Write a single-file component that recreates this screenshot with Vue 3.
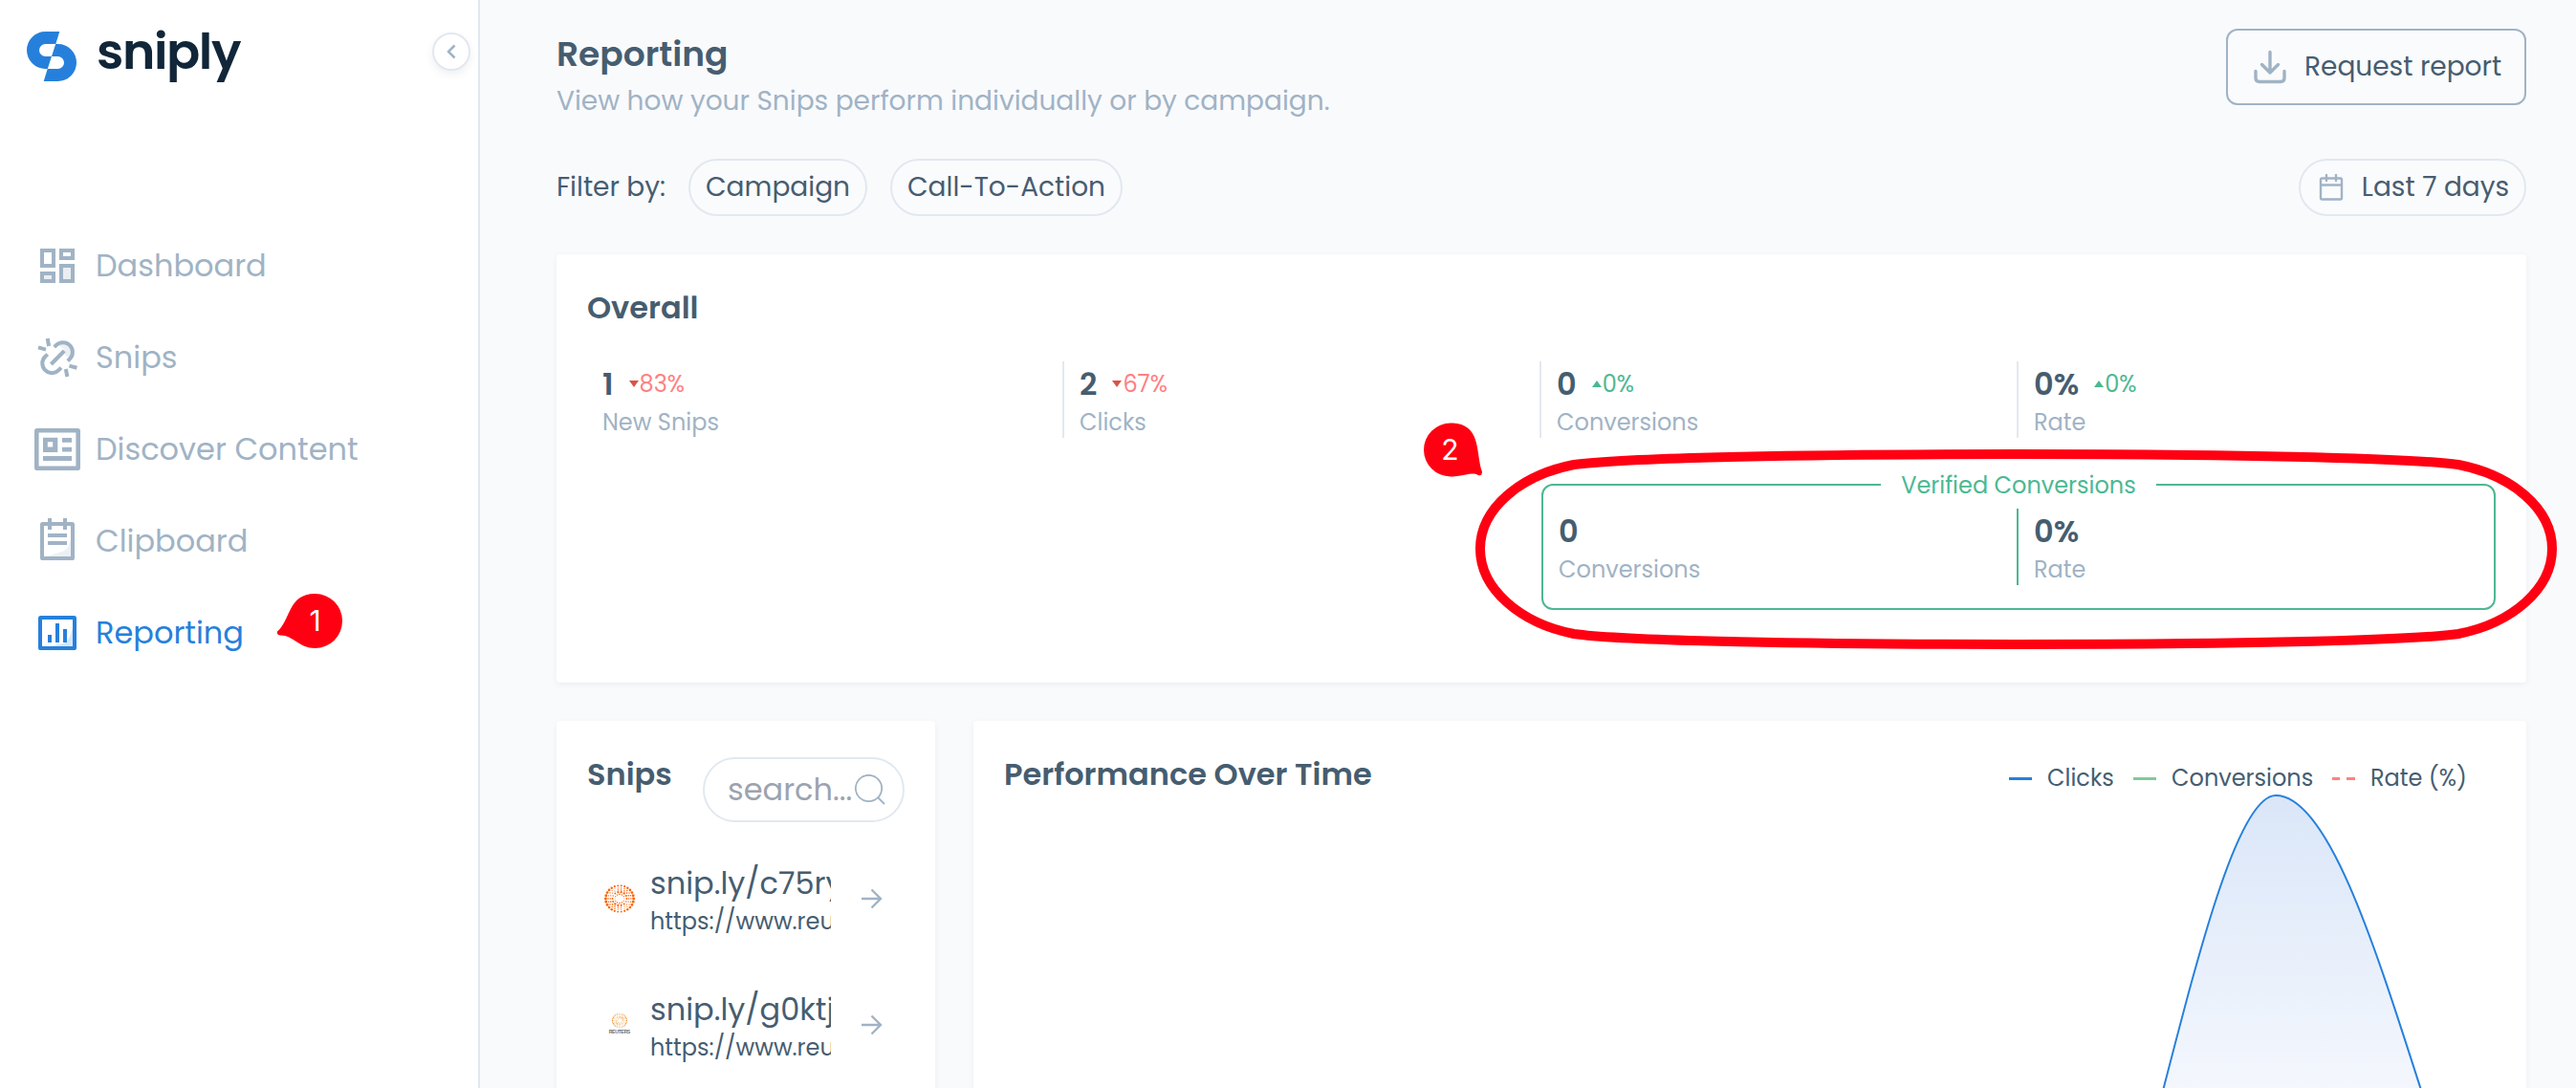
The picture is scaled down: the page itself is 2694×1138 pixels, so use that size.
<script setup>
import { ref } from 'vue'

const search = ref('')

const navItems = [
  { id: 'dashboard', label: 'Dashboard' },
  { id: 'snips', label: 'Snips' },
  { id: 'discover', label: 'Discover Content' },
  { id: 'clipboard', label: 'Clipboard' },
  { id: 'reporting', label: 'Reporting', active: true }
]

const stats = [
  { id: 'snips', value: '1', delta: '83%', trend: 'down', label: 'New Snips' },
  { id: 'clicks', value: '2', delta: '67%', trend: 'down', label: 'Clicks' },
  { id: 'conversions', value: '0', delta: '0%', trend: 'up', label: 'Conversions' },
  { id: 'rate', value: '0%', delta: '0%', trend: 'up', label: 'Rate' }
]

const verified = [
  { id: 'conversions', value: '0', label: 'Conversions' },
  { id: 'rate', value: '0%', label: 'Rate' }
]

const snips = [
  { id: 'c75ry', short: 'snip.ly/c75ry', url: 'https://www.reu', icon: 'globe' },
  { id: 'g0ktj', short: 'snip.ly/g0ktj', url: 'https://www.reu', icon: 'reuters' }
]

const legend = [
  { id: 'clicks', label: 'Clicks' },
  { id: 'conversions', label: 'Conversions' },
  { id: 'rate', label: 'Rate (%)' }
]

// rings of dots for the favicon
const rings = [
  { r: 4.9, n: 12, size: 0.7 },
  { r: 7.5, n: 14, size: 1.05 },
  { r: 9.8, n: 18, size: 0.75 },
  { r: 11.9, n: 22, size: 0.7 },
  { r: 14.6, n: 26, size: 1.3 }
]

const dots = rings.flatMap(({ r, n, size }) =>
  Array.from({ length: n }, (_, i) => {
    const a = (i / n) * Math.PI * 2
    return {
      x: 16 + Math.cos(a) * r,
      y: 16 + Math.sin(a) * r * 0.94,
      size: size * (0.7 + 0.4 * Math.abs(Math.cos(a + (14.6 - r) * 0.16)))
    }
  })
)
</script>

<template>
  <div class="page">
    <aside class="sidebar">
      <div class="brand">
        <svg class="brand-mark" viewBox="0 0 52 52">
          <path d="M34.3 0H19.5a19.5 19.5 0 0 0 0 39h2.3L26 26h-6.500a6.500 6.500 0 0 1 0-13h10.800z" />
          <path d="M34.3 0H19.5a19.5 19.5 0 0 0 0 39h2.3L26 26h-6.500a6.500 6.500 0 0 1 0-13h10.800z" transform="rotate(180 26 26)" />
        </svg>
        <span class="brand-name">sniply</span>
        <button class="collapse">
          <svg viewBox="0 0 36 36"><path d="M21.500 11.500L15 18l6.500 6.500" /></svg>
        </button>
      </div>

      <nav class="nav">
        <a v-for="item in navItems" :key="item.id" class="nav-item" :class="{ active: item.active }">
          <svg v-if="item.id === 'dashboard'" class="nav-icon" viewBox="0 0 24 24">
            <path class="line" d="M4 4h6v8H4zM14 4h6v4h-6z" />
            <path class="line tint" d="M4 16h6v4H4zM14 12h6v8h-6z" />
          </svg>
          <svg v-else-if="item.id === 'snips'" class="nav-icon" viewBox="0 0 24 24">
            <path class="shade" d="M12 5.500A5 5 0 0 1 18.600 12.600L16 10.500l-.5-3z" />
            <path class="line" d="M10.400 6.600L11.300 5.600A5 5 0 0 1 18.500 12.700L17.400 13.700M6.900 10.300L5.600 11.500A5 5 0 0 0 12.700 18.600L14 17.300M8.700 15.500l6.900-7" />
            <path class="line" d="M6.800 2l.8 4M2 6.700l4 1.100M18.200 16.300l4 1.100M16.400 18l.8 4" />
          </svg>
          <svg v-else-if="item.id === 'discover'" class="nav-icon" viewBox="0 0 48 48">
            <rect class="line thick" x="2.300" y="4.300" width="43.400" height="39.400" rx="0.500" />
            <path class="solid" fill-rule="evenodd" d="M9 11.700h15.300V27H9zM13.800 16.300v5.200h5.400v-5.200z" />
            <path class="solid" d="M29 12h10v4.700H29zM29 21.700h10v4.700H29zM9 31h30v5H9z" />
          </svg>
          <svg v-else-if="item.id === 'clipboard'" class="nav-icon" viewBox="0 0 24 24">
            <path class="shade" d="M5 20.600l10-3.400q2.500-.8 3.200-3.700L20 9v12H5z" />
            <rect class="line" x="4" y="3" width="16" height="18" rx="0.300" />
            <path class="line" d="M8 0v6M16 0v6M7 9h10M7 13h10" />
          </svg>
          <svg v-else class="nav-icon" viewBox="0 0 24 24">
            <path class="shade" d="M6 19.500l9-2q3-1 4-5L21 6v14H6z" />
            <rect class="line" x="3" y="4" width="18" height="16" rx="0.300" />
            <path class="line" d="M8 13v4M12 7v10M16 10v7" />
          </svg>
          <span>{{ item.label }}</span>
        </a>
      </nav>
    </aside>

    <main class="main">
      <header class="page-header">
        <div>
          <h1 class="page-title">Reporting</h1>
          <p class="page-subtitle">View how your Snips perform individually or by campaign.</p>
        </div>
        <button class="request">
          <svg class="request-icon" viewBox="0 0 36 36">
            <path d="M18 2.500V24M9.500 15.500L18 24l8.500-8.500M3 22.500v7q0 4 4 4h22q4 0 4-4v-7" />
          </svg>
          <span>Request report</span>
        </button>
      </header>

      <div class="filters">
        <span class="filter-label">Filter by:</span>
        <button class="pill campaign">Campaign</button>
        <button class="pill cta">Call-To-Action</button>
        <button class="pill range">
          <svg class="range-icon" viewBox="0 0 28 28">
            <path d="M4.500 4.500h19q1.500 0 1.500 1.500v19q0 1.500-1.500 1.500h-19Q3 26.500 3 25V6q0-1.500 1.500-1.500zM3 11.500h22M9 1v6M19 1v6" />
          </svg>
          <span>Last 7 days</span>
        </button>
      </div>

      <section class="card overall">
        <h2 class="card-title">Overall</h2>
        <div class="stats">
          <div v-for="stat in stats" :key="stat.id" class="stat">
            <div class="stat-top">
              <span class="stat-value">{{ stat.value }}</span>
              <span class="delta" :class="stat.trend">
                <i class="triangle"></i>
                <span>{{ stat.delta }}</span>
              </span>
            </div>
            <span class="stat-label">{{ stat.label }}</span>
          </div>
        </div>
        <div class="verified">
          <span class="verified-title">Verified Conversions</span>
          <div v-for="stat in verified" :key="stat.id" class="stat">
            <div class="stat-top">
              <span class="stat-value">{{ stat.value }}</span>
            </div>
            <span class="stat-label">{{ stat.label }}</span>
          </div>
        </div>
      </section>

      <div class="columns">
        <section class="card snips">
          <div class="snips-header">
            <h2 class="card-title">Snips</h2>
            <label class="search">
              <input v-model="search" class="search-input" type="text" placeholder="search..." />
              <svg class="search-icon" viewBox="0 0 32 32">
                <circle cx="14.500" cy="14.500" r="13.700" />
                <path d="M24 24l7 7" />
              </svg>
            </label>
          </div>
          <ul class="snip-list">
            <li v-for="snip in snips" :key="snip.id" class="snip">
              <svg v-if="snip.icon === 'globe'" class="favicon globe" viewBox="0 0 32 32">
                <circle v-for="(dot, i) in dots" :key="i" :cx="dot.x" :cy="dot.y" :r="dot.size" />
              </svg>
              <svg v-else class="favicon reuters" viewBox="0 0 32 32">
                <g transform="translate(7.800 3.300) scale(0.510)">
                  <circle v-for="(dot, i) in dots" :key="i" :cx="dot.x" :cy="dot.y" :r="dot.size" />
                </g>
                <text x="16" y="25.200" text-anchor="middle" textLength="22.500">REUTERS</text>
              </svg>
              <div class="snip-text">
                <span class="snip-short">{{ snip.short }}</span>
                <span class="snip-url">{{ snip.url }}</span>
              </div>
              <svg class="arrow" viewBox="0 0 24 24"><path d="M1 12h20M11.500 2.500L21 12l-9.500 9.500" /></svg>
            </li>
          </ul>
        </section>

        <section class="card performance">
          <div class="performance-header">
            <h2 class="card-title">Performance Over Time</h2>
            <div class="legend">
              <span v-for="item in legend" :key="item.id" class="legend-item" :class="item.id">
                <i class="swatch"></i>
                <span>{{ item.label }}</span>
              </span>
            </div>
          </div>
          <svg class="chart" viewBox="0 0 1560 310">
            <defs>
              <linearGradient id="clicks-fill" x1="0" y1="0" x2="0" y2="1">
                <stop offset="0" stop-color="#dae6f8" />
                <stop offset="1" stop-color="#f4f7fd" />
              </linearGradient>
            </defs>
            <path fill="url(#clicks-fill)" d="M1213 307C1251.700 157 1292 2 1330 2C1384 2 1433 157 1481 307v6h-268z" />
            <path class="chart-line" d="M1211.500 313L1213 307C1251.700 157 1292 2 1330 2C1384 2 1433 157 1481 307l2 6" />
          </svg>
        </section>
      </div>
    </main>

    <!-- walkthrough markers -->
    <svg class="markers" viewBox="0 0 2694 1138">
      <path
        class="ring"
        d="M2108 475C1900 475 1700 478.500 1646 486C1590 497 1548 532 1548 574S1590 652 1646 663C1700 670.500 1900 674 2108 674S2517 670.500 2571 663C2627 652 2669 616 2669 574S2627 497 2571 486C2517 478.500 2316 475 2108 475z"
      />
      <path class="pin" d="M329.500 621a28.500 28.500 0 1 1 0 57C313 678 306 664 293 664.500Q289 664 290 660.500C304 649 301 621 329.500 621z" />
      <text x="329.500" y="660">1</text>
      <path class="pin" d="M1517 442.500C1550 442.500 1543 474 1550 493.500Q1550 498 1546 497C1538 493 1532 498.500 1517 498.500a28 28 0 0 1 0-56z" />
      <text x="1516.500" y="480.500">2</text>
    </svg>
  </div>
</template>

<style>
body {
  margin: 0;
  background: #f9fafc;
}
</style>

<style scoped>
.page {
  position: relative;
  display: flex;
  width: 2694px;
  height: 1138px;
  overflow: hidden;
  box-sizing: border-box;
  background: #f9fafc;
  color: #465d70;
  font-family: Poppins, Inter, sans-serif;
  font-size: 28px;
}

.page * {
  box-sizing: border-box;
}

button {
  font: inherit;
  color: inherit;
  padding: 0;
}

svg {
  flex-shrink: 0;
  fill: none;
}

/* sidebar */
.sidebar {
  width: 502px;
  flex-shrink: 0;
  background: #fff;
  border-right: 2px solid #e2e8f0;
}

.brand {
  display: flex;
  align-items: flex-start;
  height: 230px;
  padding: 33px 8px 0 28px;
}

.brand-mark {
  width: 52px;
  height: 52px;
  fill: #2680db;
}

.brand-name {
  margin: -11px 0 0 21px;
  font-size: 52px;
  line-height: 64px;
  font-weight: 600;
  letter-spacing: -1.4px;
  color: #112639;
}

.collapse {
  width: 40px;
  height: 40px;
  margin: 1px 0 0 auto;
  border: 2px solid #e2e8f0;
  border-radius: 50%;
  background: #fff;
  box-shadow: 0 4px 8px rgba(50, 70, 90, 0.08);
}

.collapse svg {
  display: block;
  width: 36px;
  height: 36px;
  stroke: #a0b3c5;
  stroke-width: 2.5;
}

.nav-item {
  display: flex;
  align-items: center;
  gap: 16px;
  height: 96px;
  padding-left: 36px;
  font-size: 32px;
  color: #a0b3c5;
}

.nav-item.active {
  color: #2680db;
}

.nav-icon {
  width: 48px;
  height: 48px;
}

.line {
  stroke: currentColor;
  stroke-width: 2;
}

.thick {
  stroke-width: 4.6;
}

.tint {
  fill: currentColor;
  fill-opacity: 0.22;
}

.solid {
  fill: currentColor;
}

.shade {
  fill: currentColor;
  opacity: 0.2;
}

/* content */
.main {
  width: 2140px;
  padding: 30px 0 0 80px;
}

.page-header {
  display: flex;
  justify-content: space-between;
  align-items: flex-start;
  height: 136px;
}

.page-title {
  margin: 0;
  font-size: 36px;
  line-height: 54px;
  font-weight: 600;
}

.page-subtitle {
  margin: 0;
  font-size: 28px;
  line-height: 43px;
  color: #a0b3c5;
}

.request {
  display: flex;
  align-items: center;
  width: 314px;
  height: 80px;
  padding-left: 26px;
  gap: 18px;
  border: 2px solid #a0b3c5;
  border-radius: 12px;
  background: #fafbfd;
  white-space: nowrap;
}

.request-icon {
  width: 36px;
  height: 36px;
  stroke: #a0b3c5;
  stroke-width: 3.4;
  stroke-linecap: round;
  stroke-linejoin: round;
}

.filters {
  display: flex;
  align-items: center;
  height: 60px;
}

.filter-label {
  width: 138px;
}

.pill {
  display: flex;
  align-items: center;
  justify-content: center;
  height: 60px;
  border: 2px solid #e2e8f0;
  border-radius: 30px;
  background: #fafbfd;
  white-space: nowrap;
}

.campaign {
  width: 187px;
}

.cta {
  width: 243px;
  margin-left: 24px;
}

.range {
  width: 238px;
  margin-left: auto;
  padding-left: 2px;
  gap: 18px;
}

.range-icon {
  width: 28px;
  height: 28px;
  stroke: #a0b3c5;
  stroke-width: 2.4;
  stroke-linecap: round;
}

.card {
  padding: 32px;
  background: #fff;
  border-radius: 4px;
  box-shadow: 0 2px 6px rgba(60, 80, 100, 0.07);
}

.card-title {
  margin: 0;
  font-size: 32px;
  line-height: 48px;
  font-weight: 600;
}

.overall {
  height: 448px;
  margin-top: 40px;
}

.stats {
  display: grid;
  grid-template-columns: repeat(4, 1fr);
  margin-top: 32px;
}

.stat {
  height: 80px;
  padding-left: 16px;
  border-right: 2px solid #e2e8f0;
}

.stat:last-child {
  border-right: none;
}

.stat-top {
  display: flex;
  align-items: center;
  gap: 16px;
  height: 47px;
}

.stat-value {
  font-size: 32px;
  font-weight: 600;
}

.stat-label {
  display: block;
  font-size: 24px;
  line-height: 34px;
  color: #a0b3c5;
}

.delta {
  display: flex;
  align-items: center;
  gap: 1px;
  font-size: 24px;
}

.triangle {
  border-left: 5px solid transparent;
  border-right: 5px solid transparent;
}

.down {
  color: #ff8080;
}

.down .triangle {
  border-top: 7px solid #d9534a;
}

.up {
  color: #4cb892;
}

.up .triangle {
  border-bottom: 7px solid #4cb892;
}

.verified {
  position: relative;
  display: grid;
  grid-template-columns: 1fr 1fr;
  width: 998px;
  height: 132px;
  margin: 48px 0 0 auto;
  padding: 24px 0;
  border: 2px solid #4cb892;
  border-radius: 12px;
}

.verified .stat {
  border-color: #4cb892;
}

.verified-title {
  position: absolute;
  top: -18px;
  left: 353px;
  width: 288px;
  font-size: 24px;
  line-height: 36px;
  text-align: center;
  background: #fff;
  color: #4cb892;
}

.columns {
  display: grid;
  grid-template-columns: 396px 1fr;
  gap: 40px;
  height: 420px;
  margin-top: 40px;
}

.snips-header {
  display: flex;
  justify-content: space-between;
  align-items: flex-start;
}

.search {
  display: flex;
  align-items: center;
  width: 211px;
  height: 68px;
  margin-top: 6px;
  padding-left: 24px;
  border: 2px solid #e2e8f0;
  border-radius: 34px;
}

.search-input {
  width: 133px;
  padding: 0;
  border: none;
  outline: none;
  background: none;
  font: inherit;
  font-size: 32px;
  color: inherit;
}

.search-input::placeholder {
  color: #9ca3af;
  opacity: 1;
}

.search-icon {
  width: 32px;
  height: 32px;
  stroke: #a0b3c5;
  stroke-width: 1.8;
}

.snip-list {
  list-style: none;
  margin: 14px 0 0;
  padding: 0;
}

.snip {
  display: flex;
  align-items: center;
  height: 132px;
  padding-left: 18px;
}

.favicon {
  width: 32px;
  height: 32px;
}

.globe {
  fill: #ff6200;
}

.reuters {
  fill: #ec9b3c;
}

.reuters text {
  font-family: "Liberation Sans", sans-serif;
  font-size: 5.2px;
  font-weight: 600;
  fill: #6b6b6b;
}

.snip-text {
  width: 189px;
  margin: 0 31px 0 16px;
  overflow: hidden;
  white-space: nowrap;
}

.snip-short {
  display: block;
  font-size: 32px;
  line-height: 47px;
}

.snip-url {
  display: block;
  font-size: 24px;
  line-height: 33px;
}

.arrow {
  width: 24px;
  height: 24px;
  stroke: #a0b3c5;
  stroke-width: 2.4;
}

.performance-header {
  display: flex;
  justify-content: space-between;
  align-items: flex-start;
  height: 44px;
}

.legend {
  display: flex;
  margin-top: 8px;
  font-size: 24px;
  line-height: 40px;
}

.legend-item {
  display: flex;
  align-items: center;
  gap: 16px;
}

.clicks {
  width: 130px;
}

.conversions {
  width: 208px;
}

.rate {
  width: 171px;
}

.swatch {
  width: 24px;
  height: 3px;
  margin-top: 1px;
  background: #2680db;
}

.conversions .swatch {
  background: #82c99b;
}

.rate .swatch {
  background: linear-gradient(90deg, #ff8080 8px, transparent 8px, transparent 15px, #ff8080 15px);
}

.chart {
  display: block;
  width: 1560px;
  height: 310px;
  overflow: visible;
}

.chart-line {
  stroke: #2680db;
  stroke-width: 2;
}

.markers {
  position: absolute;
  inset: 0;
  width: 2694px;
  height: 1138px;
  pointer-events: none;
}

.ring {
  stroke: #ff0013;
  stroke-width: 10;
}

.pin {
  fill: #ff0013;
}

.markers text {
  fill: #fff;
  font-family: Inter, sans-serif;
  font-size: 30px;
  text-anchor: middle;
}
</style>
